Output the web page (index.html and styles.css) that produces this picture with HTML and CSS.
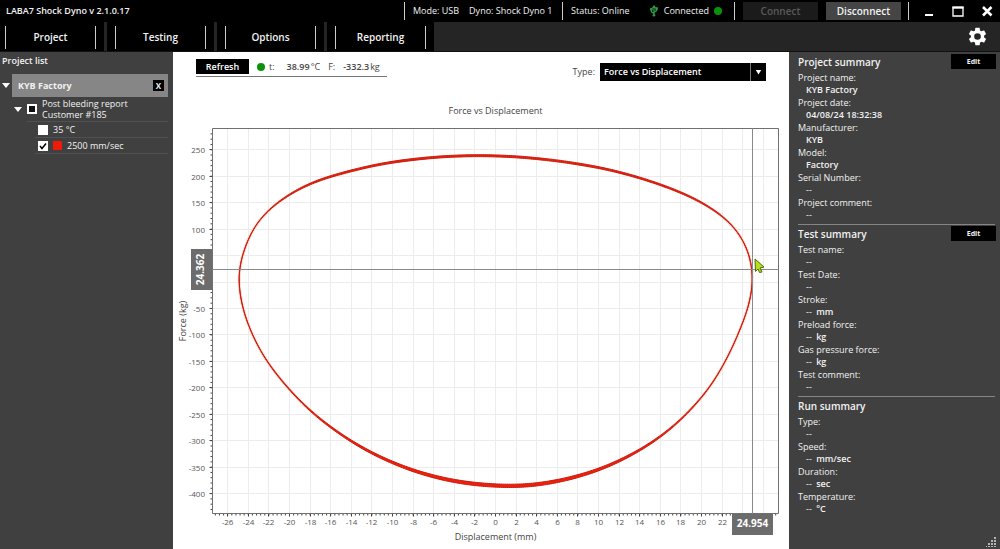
FILE: index.html
```html
<!DOCTYPE html>
<html lang="en">
<head>
<meta charset="utf-8">
<title>LABA7 Shock Dyno</title>
<link rel="stylesheet" href="styles.css">
</head>
<body>
<div class="app">
  <header class="titlebar">
    <h1 class="app-name">LABA7 Shock Dyno v 2.1.0.17</h1>
    <div class="segment segment-mode"><span>Mode: USB</span><span>Dyno: Shock Dyno 1</span></div>
    <div class="segment segment-status">
      <span>Status: Online</span>
      <span class="connection">
        <svg class="usb" viewBox="0 0 10 14" aria-hidden="true"><path d="M5 12V2M5 10L2 8V5M5 8.500L8 6.500V4" fill="none" stroke="#2f9a43" stroke-width="1.500"/><path d="M5 0L7.500 3.500H2.500ZM.5 3.500h3v3h-3ZM6.500 2.500h3v3h-3Z" fill="#2f9a43"/><circle cx="5" cy="12" r="1.500" fill="#2f9a43"/></svg>
        Connected <i class="dot"></i>
      </span>
    </div>
    <div class="segment segment-buttons">
      <button class="link-button" disabled>Connect</button>
      <button class="link-button">Disconnect</button>
    </div>
    <div class="segment window-buttons">
      <button aria-label="Minimize"><svg viewBox="0 0 12 12"><path d="M2 10H10" stroke="#fff" stroke-width="2"/></svg></button>
      <button aria-label="Maximize"><svg viewBox="0 0 12 12"><path d="M1 2.500H11V11H1Z" fill="none" stroke="#fff" stroke-width="1.300"/><path d="M.4 2.500H11.600" stroke="#fff" stroke-width="2.200"/></svg></button>
      <button aria-label="Close"><svg viewBox="0 0 12 12"><path d="M2 2L10.500 10.500M10.500 2L2 10.500" stroke="#fff" stroke-width="2.600"/></svg></button>
    </div>
  </header>

  <nav class="menubar">
    <div class="tab"><button>Project</button></div>
    <div class="tab"><button>Testing</button></div>
    <div class="tab"><button>Options</button></div>
    <div class="tab"><button>Reporting</button></div>
    <button class="settings" aria-label="Settings">
      <svg viewBox="0 0 24 24"><path fill="#fff" d="M19.430 12.980c.04-.32.07-.64.07-.98s-.03-.66-.07-.98l2.110-1.650c.19-.15.24-.42.12-.64l-2-3.460c-.12-.22-.39-.3-.61-.22l-2.490 1c-.52-.4-1.080-.73-1.690-.98l-.38-2.650C14.460 2.180 14.250 2 14 2h-4c-.25 0-.46.18-.49.42l-.38 2.650c-.61.25-1.170.59-1.690.98l-2.490-1c-.23-.09-.49 0-.61.22l-2 3.460c-.13.22-.07.49.12.64l2.110 1.650c-.04.32-.07.65-.07.98s.03.66.07.98l-2.110 1.650c-.19.15-.24.42-.12.64l2 3.460c.12.22.39.3.61.22l2.490-1c.52.4 1.080.73 1.690.98l.38 2.650c.03.24.24.42.49.42h4c.25 0 .46-.18.49-.42l.38-2.650c.61-.25 1.170-.59 1.690-.98l2.490 1c.23.09.49 0 .61-.22l2-3.460c.12-.22.07-.49-.12-.64l-2.110-1.650zM12 15.800A3.800 3.800 0 1 1 12 8.200a3.800 3.800 0 0 1 0 7.600z"/></svg>
    </button>
  </nav>

  <div class="body">
    <aside class="projects">
      <h2 class="list-title">Project list</h2>
      <div class="project-row">
        <i class="caret"></i>
        <div class="project-name"><span>KYB Factory</span><button class="close-project" aria-label="Close project">X</button></div>
      </div>
      <div class="report-row">
        <i class="caret"></i>
        <label class="report-label"><input type="checkbox" class="check check-partial"><span>Post bleeding report<br>Customer #185</span></label>
      </div>
      <label class="run-row"><input type="checkbox" class="check"><span>35 °C</span></label>
      <label class="run-row"><input type="checkbox" class="check" checked><i class="swatch"></i><span>2500 mm/sec</span></label>
    </aside>

    <main class="workspace">
      <div class="toolbar">
        <div class="readings">
          <button class="refresh">Refresh</button>
          <i class="dot"></i>
          <span class="reading-t">t:</span><span class="reading-value"><b>38.99</b><span>°C</span></span>
          <span class="reading-f">F:</span><span class="reading-value"><b>-332.3</b><span>kg</span></span>
        </div>
        <div class="type-field">
          <label for="type">Type:</label>
          <div class="select-box">
            <select id="type"><option>Force vs Displacement</option></select>
            <span class="select-arrow"><i class="caret"></i></span>
          </div>
        </div>
      </div>
      <svg class="chart" id="chart" viewBox="173 92 616 457" role="img" aria-label="Force vs Displacement"></svg>
    </main>

    <aside class="summary">
      <section class="card">
        <div class="card-head"><h2>Project summary</h2><button class="edit">Edit</button></div>
        <dl>
          <dt>Project name:</dt><dd>KYB Factory</dd>
          <dt>Project date:</dt><dd>04/08/24 18:32:38</dd>
          <dt>Manufacturer:</dt><dd>KYB</dd>
          <dt>Model:</dt><dd>Factory</dd>
          <dt>Serial Number:</dt><dd><span>--</span></dd>
          <dt>Project comment:</dt><dd><span>--</span></dd>
        </dl>
      </section>
      <section class="card">
        <div class="card-head"><h2>Test summary</h2><button class="edit">Edit</button></div>
        <dl>
          <dt>Test name:</dt><dd><span>--</span></dd>
          <dt>Test Date:</dt><dd><span>--</span></dd>
          <dt>Stroke:</dt><dd><span>--</span> mm</dd>
          <dt>Preload force:</dt><dd><span>--</span> kg</dd>
          <dt>Gas pressure force:</dt><dd><span>--</span> kg</dd>
          <dt>Test comment:</dt><dd><span>--</span></dd>
        </dl>
      </section>
      <section class="card">
        <div class="card-head"><h2>Run summary</h2></div>
        <dl>
          <dt>Type:</dt><dd><span>--</span></dd>
          <dt>Speed:</dt><dd><span>--</span> mm/sec</dd>
          <dt>Duration:</dt><dd><span>--</span> sec</dd>
          <dt>Temperature:</dt><dd><span>--</span> °C</dd>
        </dl>
      </section>
      <svg class="grip" viewBox="0 0 10 10" aria-hidden="true"><path fill="#b5b5b5" d="M8 0h2v2H8zM8 3h2v2H8zM8 6h2v2H8zM8 9h2v1H8zM5 3h2v2H5zM5 6h2v2H5zM5 9h2v1H5zM2 6h2v2H2zM2 9h2v1H2zM0 9h1v1H0z"/></svg>
    </aside>
  </div>
</div>
<script src="chart.js"></script>
</body>
</html>
```
FILE: styles.css
```css
* { box-sizing: border-box; }
body {
  margin: 0;
  background: #000;
  color: #f2f2f2;
  font-family: "Open Sans", "Noto Sans", sans-serif;
  font-size: 9px;
  line-height: 12px;
}
h1, h2, dl, dd { margin: 0; }
button, select { font: inherit; color: inherit; border: 0; padding: 0; margin: 0; border-radius: 0; }
svg { display: block; }
.app { min-height: 100vh; display: flex; flex-direction: column; }

.titlebar { height: 22px; display: flex; align-items: center; background: #000; }
.app-name { flex: 1; padding-left: 6px; font-size: 9px; font-weight: 600; }
.segment { height: 18px; display: flex; align-items: center; border-left: 1px solid #ccc; padding-left: 8px; white-space: nowrap; font-weight: 500; }
.segment-mode { width: 158px; gap: 10px; }
.segment-status { width: 172px; justify-content: space-between; padding-right: 12px; }
.segment-buttons { width: 174px; gap: 8px; }
.connection { display: flex; align-items: center; gap: 5px; }
.usb { width: 10px; height: 12px; }
.dot { width: 8px; height: 8px; border-radius: 50%; background: #0a920a; }
.link-button { width: 75px; height: 18px; background: #454545; font-size: 10px; font-weight: 600; }
.link-button:disabled { background: #1b1b1b; color: #5a5a5a; }
.window-buttons { width: 92px; padding: 0 7px 0 14px; justify-content: space-between; }
.window-buttons button { background: none; width: 12px; height: 12px; }

.menubar { height: 30px; display: flex; align-items: stretch; gap: 3px; background: #252525; border-bottom: 1px solid #111; }
.tab { width: 107px; padding: 4px 8px 2px 8px; background: #000; }
.tab:first-child { width: 104px; padding-left: 5px; }
.tab button { width: 100%; height: 100%; background: none; border: solid #ccc; border-width: 0 1px; font-size: 10px; font-weight: 600; padding-bottom: 2px; }
.settings { margin-left: auto; margin-right: 12px; background: none; align-self: center; }
.settings svg { width: 21px; height: 21px; }

.body { flex: 1; display: grid; grid-template-columns: 173px 1fr 211px; background: #404040; }
.projects { padding-right: 5px; }
.list-title { padding: 3px 2px; height: 22px; font-size: 9px; font-weight: 600; }
.caret { width: 8px; height: 5px; background: #fff; clip-path: polygon(0 0, 100% 0, 50% 100%); }
.project-row { display: flex; align-items: center; gap: 2px; padding-left: 2px; }
.project-name { flex: 1; height: 23px; display: flex; align-items: center; justify-content: space-between; padding: 0 4px 0 6px; background: #868686; font-weight: 700; }
.close-project { width: 11px; height: 11px; background: #000; font-size: 8px; line-height: 10px; }
.report-row { display: flex; align-items: center; gap: 5px; height: 25px; margin-left: 14px; }
.report-label { flex: 1; height: 25px; display: flex; align-items: center; gap: 5px; line-height: 11px; border-bottom: 1px solid #505050; }
.check { appearance: none; width: 10px; height: 10px; margin: 0; background: #fff; }
.check-partial { border: 2px solid #fff; background: #111; }
.check:checked { background: #fff url("data:image/svg+xml,%3Csvg xmlns='http://www.w3.org/2000/svg' viewBox='0 0 10 10'%3E%3Cpath d='M2 5l2 2.500 4-5' fill='none' stroke='%23000' stroke-width='1.500'/%3E%3C/svg%3E"); }
.run-row { display: flex; align-items: center; gap: 5px; height: 16px; margin-left: 35px; padding-left: 3px; border-bottom: 1px solid #505050; }
.swatch { width: 9px; height: 9px; background: #f01a08; border-radius: 1px; }

.workspace { background: #fff; color: #444; display: flex; flex-direction: column; min-width: 0; }
.toolbar { height: 40px; padding: 7px 23px 0; display: flex; justify-content: space-between; align-items: flex-start; }
.readings { display: flex; align-items: center; padding: 0 7px 2px 0; border-bottom: 1px solid #777; white-space: nowrap; }
.refresh { width: 53px; height: 15px; margin-right: 8px; background: #000; color: #fff; font-weight: 600; }
.reading-t { margin: 0 12px 0 4px; }
.reading-f { margin: 0 8px; }
.reading-value { display: flex; gap: 1px; }
.reading-value b { font-weight: 600; }
.type-field { display: flex; align-items: center; gap: 5px; padding-top: 4px; }
.select-box { display: grid; grid-template-columns: 150px 16px; height: 18px; background: #000; color: #fff; }
.select-box select { grid-area: 1 / 1 / 2 / 3; appearance: none; background: none; padding-left: 4px; font-weight: 600; }
.select-arrow { grid-area: 1 / 2; display: flex; align-items: center; justify-content: center; border-left: 1px solid #777; pointer-events: none; }
.select-arrow .caret { width: 6px; }

.chart { width: 100%; flex: 1; }
.chart text { font-size: 8px; fill: #555; }
.chart .chart-caption { font-size: 9px; fill: #444; }
.chart .readout { font-size: 10px; font-weight: 700; fill: #fff; }
.frame { fill: none; stroke: #707070; }
.grid-lines { fill: none; stroke: #ececec; }
.ticks { fill: none; stroke: #444; }
.crosshair { fill: none; stroke: #8a8a8a; }
.readout-box { fill: #6c6c6c; }
.trace-glow { fill: none; stroke: #ffd6cc; stroke-width: 3; }
.trace { fill: #f01f0c; stroke: #c41c0e; stroke-width: 1; }

.summary { padding: 1px 4px 2px 9px; display: flex; flex-direction: column; font-weight: 500; }
.card + .card { border-top: 1px solid transparent; border-image: linear-gradient(to right, #858585 196px, transparent 196px) 1; }
.card-head { height: 17px; display: flex; justify-content: space-between; align-items: center; }
.card-head h2 { font-size: 10px; font-weight: 600; }
.edit { width: 45px; height: 15px; background: #000; font-size: 7px; font-weight: 700; }
.card dl { padding: 1px 0 3px; }
.card dt { height: 13px; line-height: 13px; }
.card dd { height: 12px; line-height: 11px; padding-left: 8px; font-weight: 600; }
.card dd span { font-weight: 400; margin-right: 2px; }
.grip { width: 10px; height: 10px; margin: auto 0 0 auto; }
```
FILE: chart.js
```javascript
const chart = document.getElementById("chart");
const plot = { left: 212.5, right: 778.5, top: 128.5, bottom: 513.5 };
const xAt = mm => 495.5 + mm * 10.3;
const yAt = kg => 282 - kg * 0.529;

function add(tag, attrs, text) {
  const node = document.createElementNS("http://www.w3.org/2000/svg", tag);
  for (const key in attrs) node.setAttribute(key, attrs[key]);
  if (text !== undefined) node.textContent = text;
  chart.appendChild(node);
}

let grid = "";
let ticks = "";
for (let mm = -26; mm <= 26; mm += 2) {
  const x = Math.floor(xAt(mm)) + 0.5;
  grid += `M${x} ${plot.top}V${plot.bottom}`;
  ticks += `M${x} ${plot.bottom}v3`;
  if (mm < 24) add("text", { x, y: 525, "text-anchor": "middle" }, mm);
}
for (let kg = -400; kg <= 250; kg += 50) {
  const y = Math.floor(yAt(kg)) + 0.5;
  grid += `M${plot.left} ${y}H${plot.right}`;
  ticks += `M${plot.left} ${y}h-3`;
  if (kg !== 0 && kg !== 50) add("text", { x: 205, y: y + 3, "text-anchor": "end" }, kg);
}
for (let i = -68; i <= 68; i++) ticks += `M${xAt(i * 0.4)} ${plot.bottom}v2`;
for (let i = -43; i <= 28; i++) ticks += `M${plot.left} ${yAt(i * 10)}h-2`;
add("path", { class: "grid-lines", d: grid });
add("path", { class: "ticks", d: ticks });
add("path", { class: "frame", d: `M${plot.left} ${plot.top}H${plot.right}V${plot.bottom}H${plot.left}Z` });

const samples = [
  [238.3, 280], [239, 266.7], [241.7, 256], [248.3, 238], [253.3, 227.5], [260, 218.5], [269.3, 208.5],
  [290, 193.5], [310, 183.3], [330, 176.3], [370, 166], [400, 160.8], [440, 156.6], [480, 155.3],
  [520, 156.8], [560, 161], [600, 167.5], [630, 174.8], [660, 184.3], [681, 192.3], [701.7, 202], [722, 215.3],
  [731, 223], [740, 234], [747.3, 247.7], [751.7, 261.7], [753.3, 278], [752.3, 290], [749.3, 305],
  [744.3, 319.3], [731, 351], [715, 380], [701.7, 397.8], [681, 420], [660, 437.3], [640, 450.3],
  [619, 461.3], [599, 469.8], [578, 476.5], [557, 481.5], [536.7, 484.8], [516, 486.3], [498, 485.9],
  [475, 484.3], [454, 481.3], [434, 476.8], [413, 470.7], [392.7, 462.9], [371.7, 453.2], [351.7, 441.8],
  [331, 427.7], [310, 411], [289.3, 390], [269, 365], [258.3, 347.5], [250, 330], [243.3, 311.7], [240, 296.7]
];

// Even spacing along the loop, then a running average, gives a smooth trace.
function resample(list, step) {
  const result = [];
  let carry = 0;
  list.forEach(([x, y], i) => {
    const [nx, ny] = list[(i + 1) % list.length];
    const length = Math.hypot(nx - x, ny - y);
    let s = carry;
    for (; s < length; s += step) result.push([x + (nx - x) * s / length, y + (ny - y) * s / length]);
    carry = s - length;
  });
  return result;
}
function smooth(list, reach) {
  const n = list.length;
  return list.map((_, i) => {
    let sx = 0;
    let sy = 0;
    for (let k = -reach; k <= reach; k++) {
      const p = list[(i + k + n) % n];
      sx += p[0];
      sy += p[1];
    }
    return [sx / (2 * reach + 1), sy / (2 * reach + 1)];
  });
}
const trace = smooth(smooth(smooth(resample(samples, 2), 6), 6), 5);
const polygon = list => "M" + list.map(p => p[0].toFixed(2) + " " + p[1].toFixed(2)).join("L") + "Z";

function offsetCurve(side) {
  const n = trace.length;
  return trace.map(([x, y], i) => {
    const before = trace[(i - 1 + n) % n];
    const after = trace[(i + 1) % n];
    const dx = after[0] - before[0];
    const dy = after[1] - before[1];
    const length = Math.hypot(dx, dy);
    const half = 0.05 + (dx / length) ** 4 * (y > 300 ? 1.6 : 0.9);
    return [x + side * half * dy / length, y - side * half * dx / length];
  });
}
add("path", { class: "trace-glow", d: polygon(trace) });
add("path", { class: "trace", "fill-rule": "evenodd", d: polygon(offsetCurve(1)) + polygon(offsetCurve(-1)) });

add("path", { class: "crosshair", d: `M${plot.left} 269.5H${plot.right}M752.5 ${plot.top}V${plot.bottom}` });
add("text", { class: "chart-caption", x: 495.5, y: 114, "text-anchor": "middle" }, "Force vs Displacement");
add("text", { class: "chart-caption", x: 495.5, y: 540, "text-anchor": "middle" }, "Displacement (mm)");
add("text", { class: "chart-caption", transform: "translate(186 321) rotate(-90)", "text-anchor": "middle" }, "Force (kg)");
add("rect", { class: "readout-box", x: 191, y: 249, width: 21, height: 41 });
add("text", { class: "readout", transform: "translate(204 269.5) rotate(-90)", "text-anchor": "middle" }, "24.362");
add("rect", { class: "readout-box", x: 732, y: 514, width: 41, height: 21 });
add("text", { class: "readout", x: 752.5, y: 527, "text-anchor": "middle" }, "24.954");
add("path", { d: "M755 259L764 267L760 268L762 272L759.500 272.500L758 269L755.500 271.500Z", fill: "#b5df20", stroke: "#526b08", "stroke-width": 1 });
```
